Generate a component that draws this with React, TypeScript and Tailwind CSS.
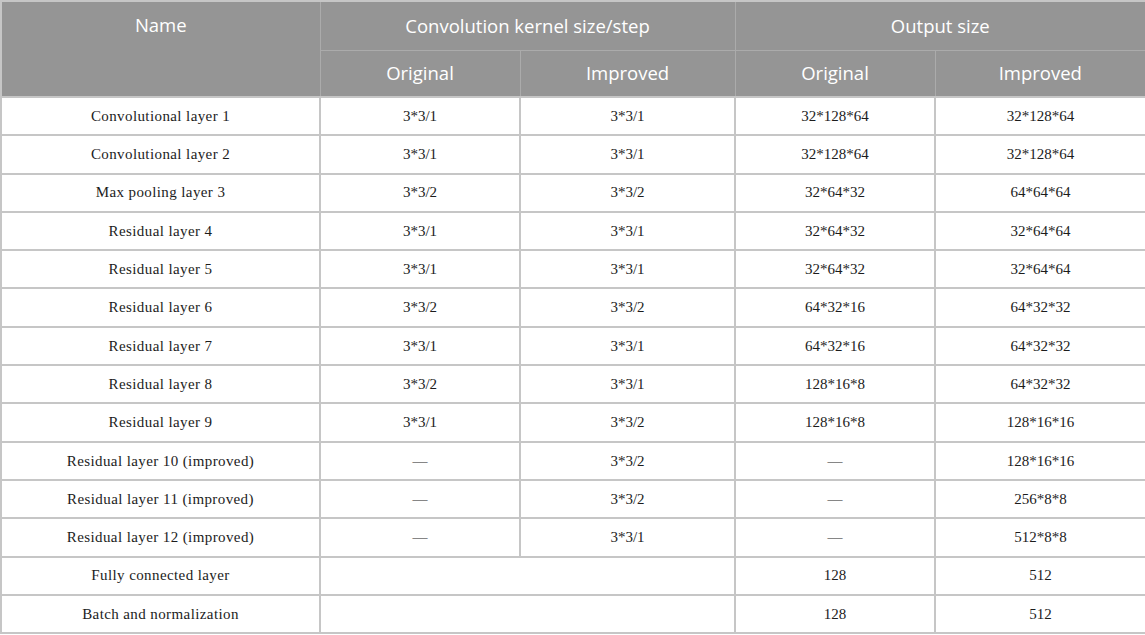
import React from "react";

const rows: [string, string, string, string, string][] = [
  ["Convolutional layer 1", "3*3/1", "3*3/1", "32*128*64", "32*128*64"],
  ["Convolutional layer 2", "3*3/1", "3*3/1", "32*128*64", "32*128*64"],
  ["Max pooling layer 3", "3*3/2", "3*3/2", "32*64*32", "64*64*64"],
  ["Residual layer 4", "3*3/1", "3*3/1", "32*64*32", "32*64*64"],
  ["Residual layer 5", "3*3/1", "3*3/1", "32*64*32", "32*64*64"],
  ["Residual layer 6", "3*3/2", "3*3/2", "64*32*16", "64*32*32"],
  ["Residual layer 7", "3*3/1", "3*3/1", "64*32*16", "64*32*32"],
  ["Residual layer 8", "3*3/2", "3*3/1", "128*16*8", "64*32*32"],
  ["Residual layer 9", "3*3/1", "3*3/2", "128*16*8", "128*16*16"],
  ["Residual layer 10 (improved)", "—", "3*3/2", "—", "128*16*16"],
  ["Residual layer 11 (improved)", "—", "3*3/2", "—", "256*8*8"],
  ["Residual layer 12 (improved)", "—", "3*3/1", "—", "512*8*8"],
];

const merged: [string, string, string][] = [
  ["Fully connected layer", "128", "512"],
  ["Batch and normalization", "128", "512"],
];

const th = "border border-[#ababab] font-normal text-white text-[18.5px] text-center align-middle";
const td = "border-2 border-[#c6c6c6] text-center align-middle text-[15px] text-[#1c1c1c]";

export default function App() {
  return (
    <div className="w-[1145px] h-[635px] bg-white overflow-hidden">
      <table className="w-[1145px] table-fixed border-collapse border-2 border-[#c6c6c6]">
        <colgroup>
          <col className="w-[319px]" />
          <col className="w-[200px]" />
          <col className="w-[215px]" />
          <col className="w-[200px]" />
          <col className="w-[211px]" />
        </colgroup>
        <thead className="bg-[#959595] font-['Open_Sans',sans-serif]">
          <tr className="h-[49px]">
            <th rowSpan={2} className={th + " pb-[48px]"}>
              Name
            </th>
            <th colSpan={2} className={th}>
              Convolution kernel size/step
            </th>
            <th colSpan={2} className={th}>
              Output size
            </th>
          </tr>
          <tr className="h-[47px]">
            <th className={th}>Original</th>
            <th className={th}>Improved</th>
            <th className={th}>Original</th>
            <th className={th}>Improved</th>
          </tr>
        </thead>
        <tbody className="font-['Liberation_Serif',serif]">
          {rows.map((r) => (
            <tr key={r[0]} className="h-[38.3px]">
              {r.map((c, i) => (
                <td key={i} className={td + (i === 0 ? " tracking-[0.4px]" : "")}>
                  {c}
                </td>
              ))}
            </tr>
          ))}
          {merged.map((r) => (
            <tr key={r[0]} className="h-[38.3px]">
              <td className={td + " tracking-[0.4px]"}>{r[0]}</td>
              <td colSpan={2} className={td}></td>
              <td className={td}>{r[1]}</td>
              <td className={td}>{r[2]}</td>
            </tr>
          ))}
        </tbody>
      </table>
    </div>
  );
}
